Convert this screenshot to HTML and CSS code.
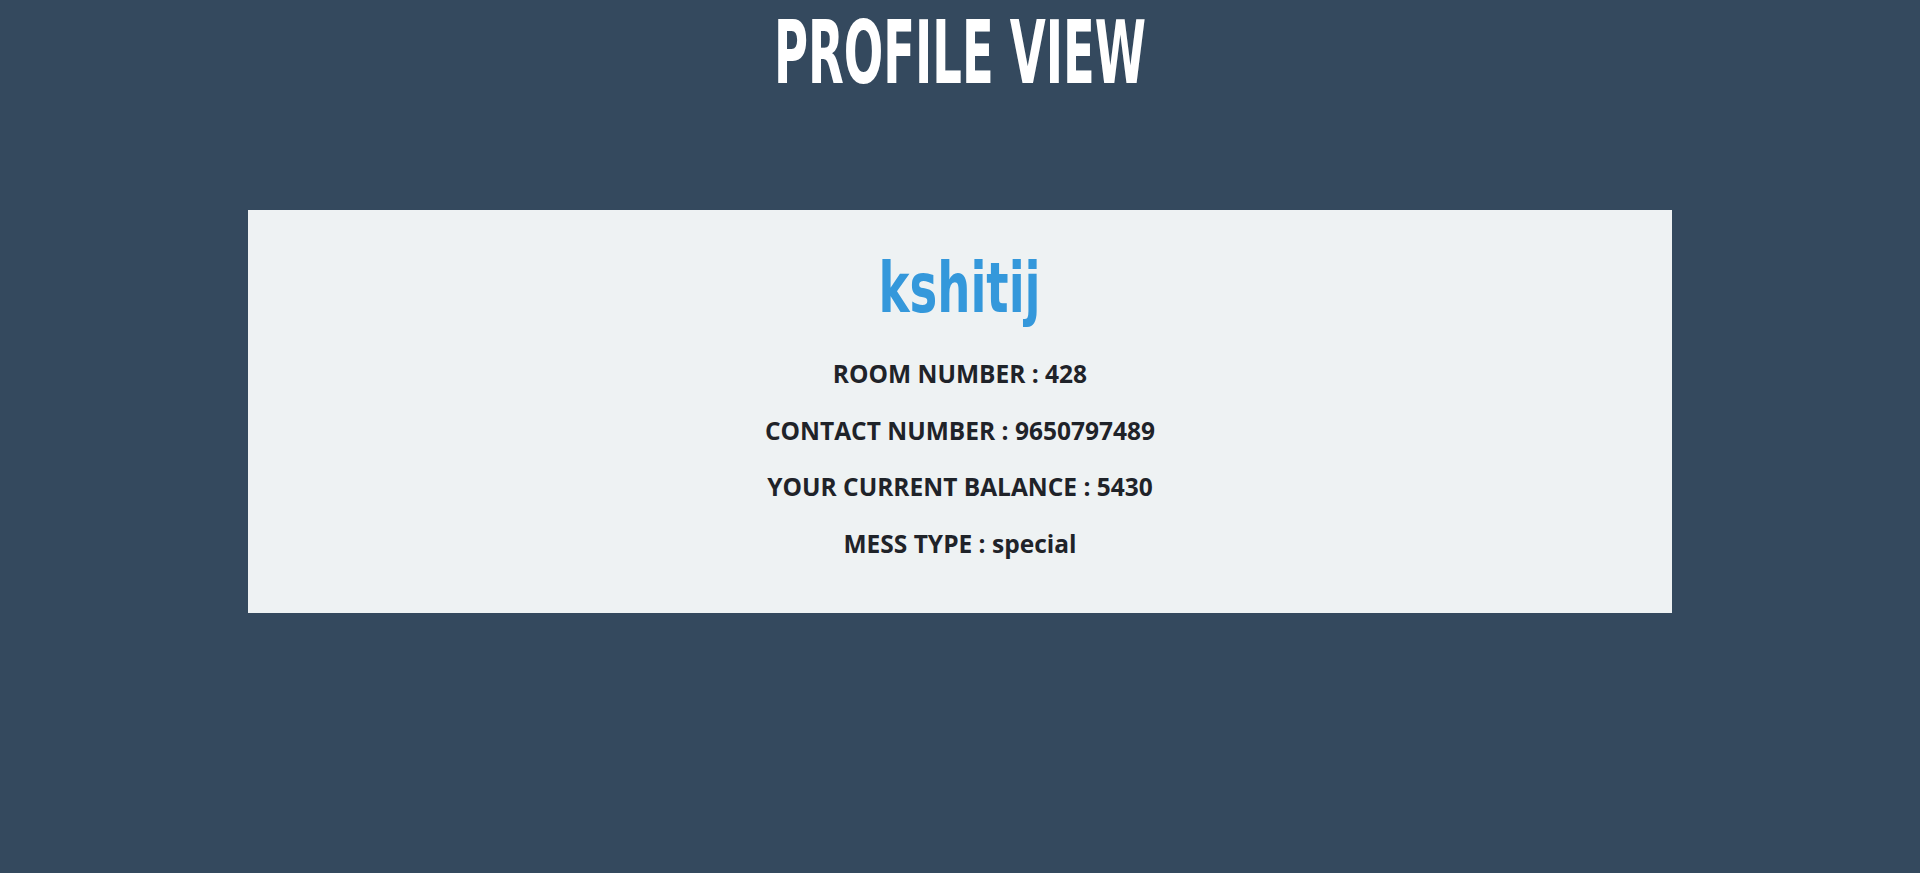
FILE: index.html
```html
<!DOCTYPE html>
<html>
<head>
<meta charset="utf-8">
<link rel="stylesheet" href="styles.css">
</head>
<body>
<header class="page-head">
  <h1 class="title"><span class="squeeze">PROFILE VIEW</span></h1>
</header>
<main class="card">
  <h2 class="name"><span class="squeeze-wide">kshitij</span></h2>
  <p class="row">ROOM NUMBER : 428</p>
  <p class="row">CONTACT NUMBER : 9650797489</p>
  <p class="row">YOUR CURRENT BALANCE : 5430</p>
  <p class="row">MESS TYPE : special</p>
</main>
</body>
</html>
```

FILE: styles.css
```css
html, body {
  margin: 0;
  padding: 0;
}
body {
  background: #34495e;
  min-height: 873px;
  font-family: "Open Sans", "Liberation Sans", sans-serif;
}
.page-head {
  display: flex;
  justify-content: center;
  height: 210px;
}
.title {
  margin: 0;
  padding-top: 9px;
  font-family: "DejaVu Sans Condensed", "DejaVu Sans", sans-serif;
  font-weight: 700;
  font-size: 88px;
  line-height: 88px;
  color: #ffffff;
  text-align: center;
}
.squeeze {
  display: inline-block;
  transform: scaleX(0.587);
  transform-origin: center;
}
.squeeze-wide {
  display: inline-block;
  transform: scaleX(0.74);
  transform-origin: center;
}
.card {
  width: 1424px;
  height: 403px;
  box-sizing: border-box;
  margin: 0 0 0 248px;
  background: #eef2f3;
  display: flex;
  flex-direction: column;
  align-items: center;
  padding-top: 38px;
}
.name {
  margin: 0 0 18px;
  font-family: "DejaVu Sans Condensed", "DejaVu Sans", sans-serif;
  font-weight: 700;
  font-size: 70px;
  line-height: 80px;
  color: #3498db;
}
.row {
  margin: 0;
  font-size: 24.5px;
  font-weight: 700;
  line-height: 56.7px;
  color: #1f2329;
}
```
